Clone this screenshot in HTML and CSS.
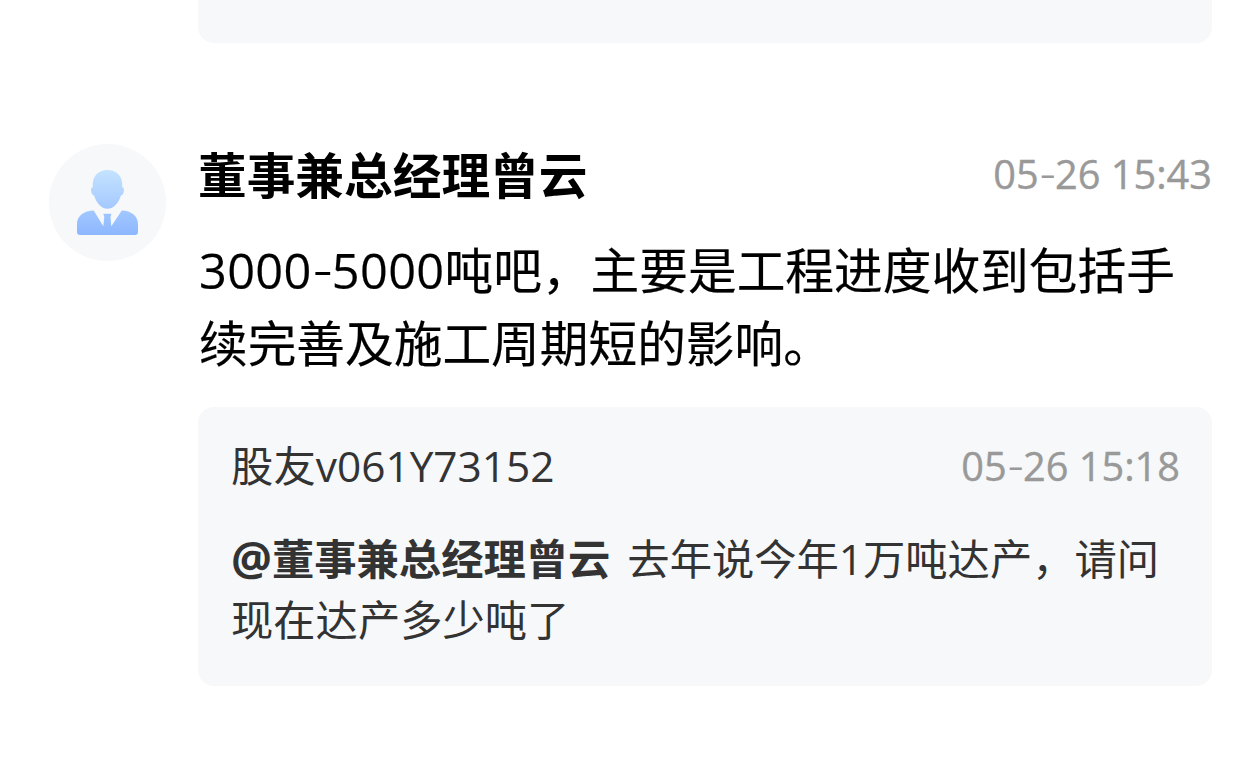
FILE: index.html
```
<!DOCTYPE html>
<html lang="zh-CN">
<head>
  <meta charset="UTF-8">
  <meta name="viewport" content="width=device-width, initial-scale=1.0">
  <title>互动问答</title>
  <link rel="stylesheet" href="styles.css">
</head>
<body>
  <main class="feed">
    <div class="quote quote-prev"></div>

    <article class="post">
      <div class="avatar">
        <svg viewBox="0 0 117 117" width="117" height="117">
          <defs>
            <linearGradient id="person" gradientUnits="userSpaceOnUse" x1="58" y1="26" x2="58" y2="91">
              <stop offset="0" stop-color="#c5e3ff"/>
              <stop offset="1" stop-color="#8db7ff"/>
            </linearGradient>
          </defs>
          <g fill="url(#person)">
            <path d="M58.500 26C68 26 73.300 32.500 73.300 41V43.200C75 43.600 75.200 45.500 74.800 47.500C74.400 49.700 73.600 51.200 72 51.200C69.500 59.500 64 64.800 58.500 64.800C53 64.800 47.500 59.500 45 51.200C43.400 51.200 42.600 49.700 42.200 47.500C41.800 45.500 42 43.600 43.700 43.200V41C43.700 32.500 49 26 58.500 26Z"/>
            <path d="M44.700 66.500L54.300 82.300L55.300 73L54.300 69.800H62.500L61.500 73L62.300 82.300L72.800 66.500C82 66.500 89 72 89 80V88C89 90 88 91 86 91H31C29 91 28 90 28 88V80C28 72 35 66.500 44.700 66.500Z"/>
          </g>
        </svg>
      </div>

      <div class="content">
        <div class="post-head">
          <h2 class="name">董事兼总经理曾云</h2>
          <span class="time">05<span class="dash">-</span>26 15:43</span>
        </div>
        <p class="text"><span class="amount">3000<span class="dash">-</span>5000</span>吨吧，主要是工程进度收到包括手续完善及施工周期短的影响。</p>

        <div class="quote">
          <div class="quote-head">
            <span class="user">股友v061Y73152</span>
            <span class="time">05<span class="dash">-</span>26 15:18</span>
          </div>
          <p class="quote-text"><strong class="mention"><span class="at">@</span>董事兼总经理曾云</strong> 去年说今年1万吨达产，请问现在达产多少吨了</p>
        </div>
      </div>
    </article>
  </main>
</body>
</html>
```
FILE: styles.css
```
* {
  box-sizing: border-box;
}
body {
  margin: 0;
  background: #ffffff;
  color: #000000;
  font-family: "Open Sans", "Noto Sans CJK SC", sans-serif;
}
h2,
p {
  margin: 0;
}
.feed {
  height: 764px;
  padding: 0 48px 0 49px;
  overflow: hidden;
}
.quote {
  background: #f7f8fa;
  border-radius: 16px;
  color: #333333;
}
.quote-prev {
  height: 43px;
  margin-left: 149px;
  border-radius: 0 0 16px 16px;
}
.post {
  display: flex;
  gap: 32px;
  margin-top: 101px;
}
.avatar {
  flex: none;
  width: 117px;
  height: 117px;
  border-radius: 50%;
  background: #f6f8fa;
}
.avatar svg {
  display: block;
}
.content {
  flex: 1;
  min-width: 0;
}
.post-head,
.quote-head {
  display: flex;
  justify-content: space-between;
  align-items: center;
}
.post-head {
  height: 64px;
}
.name {
  padding-bottom: 2px;
  font-size: 48.7px;
  font-weight: 700;
  line-height: 62px;
}
.time {
  font-size: 39.7px;
  line-height: 60px;
  color: #999999;
  -webkit-text-stroke: 0.4px #999999;
}
.post-head .time {
  padding-bottom: 4px;
}
.dash {
  font-family: Inter, sans-serif;
  font-weight: 300;
  line-height: 1;
  letter-spacing: -0.04em;
  -webkit-text-stroke: 0;
}
.text {
  margin-top: 26px;
  padding-left: 1px;
  font-size: 48.7px;
  line-height: 73px;
  -webkit-text-stroke: 0.2px #000000;
}
.amount {
  letter-spacing: 0.007em;
}
.content .quote {
  height: 279px;
  margin-top: 27px;
  padding: 29px 32px 0 33px;
}
.quote-head {
  height: 60px;
}
.user {
  font-size: 42.4px;
  line-height: 60px;
}
.quote-text {
  margin-top: 32px;
  font-size: 42.3px;
  line-height: 61px;
}
.mention {
  margin-right: 6px;
}
.at {
  font-size: 1.08em;
  line-height: 1;
}
```
